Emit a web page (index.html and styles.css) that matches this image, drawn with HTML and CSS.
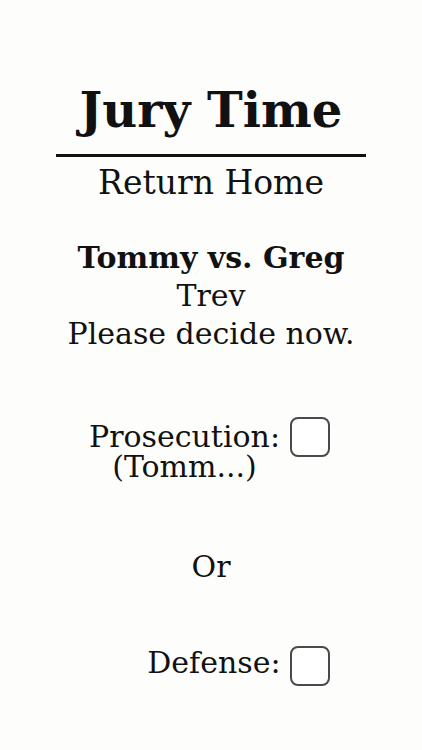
FILE: index.html
```html
<!DOCTYPE html>
<html>
<head>
<meta charset="utf-8">
<link rel="stylesheet" href="styles.css">
</head>
<body>
<div class="page">
  <header class="head">
    <h1 class="title">Jury Time</h1>
    <div class="rule"></div>
    <a class="home">Return Home</a>
  </header>
  <section class="case">
    <div class="case-name">Tommy vs. Greg</div>
    <div class="line">Trev</div>
    <div class="line">Please decide now.</div>
  </section>
  <div class="choice choice-pro">
    <label class="choice-label">Prosecution: (Tomm...)</label>
    <span class="box"></span>
  </div>
  <div class="or">Or</div>
  <div class="choice choice-def">
    <label class="choice-label">Defense:</label>
    <span class="box"></span>
  </div>
</div>
</body>
</html>
```
FILE: styles.css
```css
html, body {
  margin: 0;
  padding: 0;
  background: #fdfdfc;
}
body {
  font-family: "DejaVu Serif", serif;
  color: #111;
}
.page {
  display: flex;
  flex-direction: column;
  align-items: center;
  padding-top: 82px;
}
.head {
  display: flex;
  flex-direction: column;
  align-items: center;
}
.title {
  margin: 0;
  font-size: 48px;
  line-height: 56px;
  font-weight: bold;
}
.rule {
  width: 310px;
  height: 3px;
  background: #111;
  margin-top: 16px;
}
.home {
  font-size: 33px;
  line-height: 40px;
  margin-top: 6px;
}
.case {
  margin-top: 36px;
  display: flex;
  flex-direction: column;
  align-items: center;
  font-size: 30px;
  line-height: 38px;
}
.case-name {
  font-weight: bold;
}
.choice {
  display: flex;
  align-items: flex-start;
  gap: 9px;
  margin-right: 4px;
}
.choice-pro {
  margin-top: 64px;
}
.choice-label {
  font-size: 30px;
  line-height: 30px;
  text-align: center;
  width: 192px;
  padding-top: 5px;
}
.choice-def .choice-label {
  text-align: right;
  padding-top: 2px;
}
.box {
  width: 36px;
  height: 36px;
  border: 2px solid #4a4a4a;
  border-radius: 8px;
  background: #fff;
  flex: none;
}
.or {
  font-size: 30px;
  line-height: 38px;
  margin-top: 66px;
}
.choice-def {
  margin-top: 60px;
}
```
